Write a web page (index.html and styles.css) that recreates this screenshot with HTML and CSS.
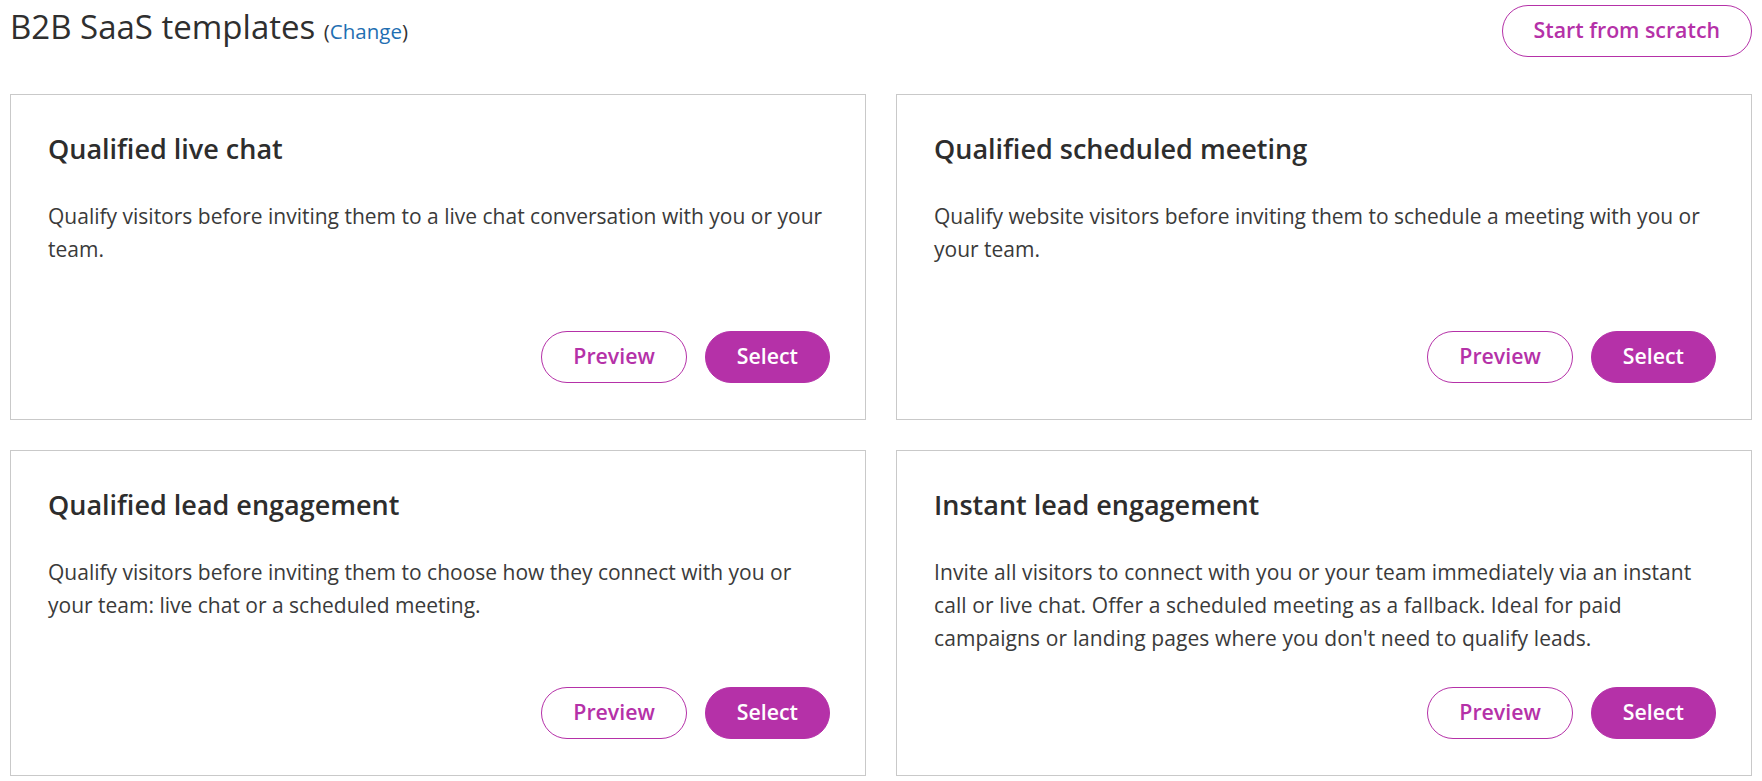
FILE: index.html
```html
<!DOCTYPE html>
<html lang="en">
<head>
<meta charset="utf-8">
<title>B2B SaaS templates</title>
<link rel="stylesheet" href="styles.css">
</head>
<body>
<div class="page">
  <header class="header">
    <h1 class="heading">B2B SaaS templates <span class="change">(<a href="#" class="change-link">Change</a>)</span></h1>
    <button class="btn btn-outline">Start from scratch</button>
  </header>
  <main class="grid">
    <section class="card">
      <h2 class="card-title">Qualified live chat</h2>
      <p class="card-text">Qualify visitors before inviting them to a live chat conversation with you or your team.</p>
      <div class="card-actions">
        <button class="btn btn-outline">Preview</button>
        <button class="btn btn-solid">Select</button>
      </div>
    </section>
    <section class="card">
      <h2 class="card-title">Qualified scheduled meeting</h2>
      <p class="card-text">Qualify website visitors before inviting them to schedule a meeting with you or your team.</p>
      <div class="card-actions">
        <button class="btn btn-outline">Preview</button>
        <button class="btn btn-solid">Select</button>
      </div>
    </section>
    <section class="card">
      <h2 class="card-title">Qualified lead engagement</h2>
      <p class="card-text">Qualify visitors before inviting them to choose how they connect with you or your team: live chat or a scheduled meeting.</p>
      <div class="card-actions">
        <button class="btn btn-outline">Preview</button>
        <button class="btn btn-solid">Select</button>
      </div>
    </section>
    <section class="card">
      <h2 class="card-title">Instant lead engagement</h2>
      <p class="card-text card-text-wide">Invite all visitors to connect with you or your team immediately via an instant call or live chat. Offer a scheduled meeting as a fallback. Ideal for paid campaigns or landing pages where you don't need to qualify leads.</p>
      <div class="card-actions">
        <button class="btn btn-outline">Preview</button>
        <button class="btn btn-solid">Select</button>
      </div>
    </section>
  </main>
</div>
</body>
</html>
```
FILE: styles.css
```css
* { box-sizing: border-box; }
html, body { margin: 0; padding: 0; background: #fff; }
body {
  font-family: "Open Sans", "Noto Sans", "Liberation Sans", sans-serif;
  color: #333;
}
.page { padding: 0 10px; }
.header {
  display: flex;
  justify-content: space-between;
  align-items: flex-start;
  padding-top: 5px;
  height: 94px;
}
.heading {
  margin: 0;
  font-size: 33px;
  font-weight: 400;
  line-height: 43px;
  color: #2f2f2f;
  white-space: nowrap;
}
.change { font-size: 20.5px; color: #333; }
.change-link { color: #1f6fb2; text-decoration: none; }
.grid {
  display: grid;
  grid-template-columns: 1fr 1fr;
  gap: 30px;
}
.card {
  height: 326px;
  border: 1px solid #c9c9c9;
  padding: 37px 35px 36px 37px;
  display: flex;
  flex-direction: column;
}
.card-title {
  margin: 0;
  font-size: 27px;
  font-weight: 600;
  line-height: 34px;
  color: #2d2d2d;
}
.card-text {
  margin: 34px 0 0;
  font-size: 21px;
  line-height: 33px;
  color: #3a3a3a;
}
.card-text-wide { letter-spacing: 0.1px; }
.card-actions {
  margin-top: auto;
  display: flex;
  justify-content: flex-end;
  gap: 18px;
}
.btn {
  font-family: inherit;
  font-size: 21.3px;
  font-weight: 600;
  height: 52px;
  padding: 0 31px 2px;
  border-radius: 26px;
  cursor: pointer;
  line-height: 1;
}
.btn-outline {
  background: #fff;
  color: #b531a8;
  border: 1px solid #b531a8;
}
.btn-solid {
  background: #b531a8;
  color: #fff;
  border: 1px solid #b531a8;
}
```
